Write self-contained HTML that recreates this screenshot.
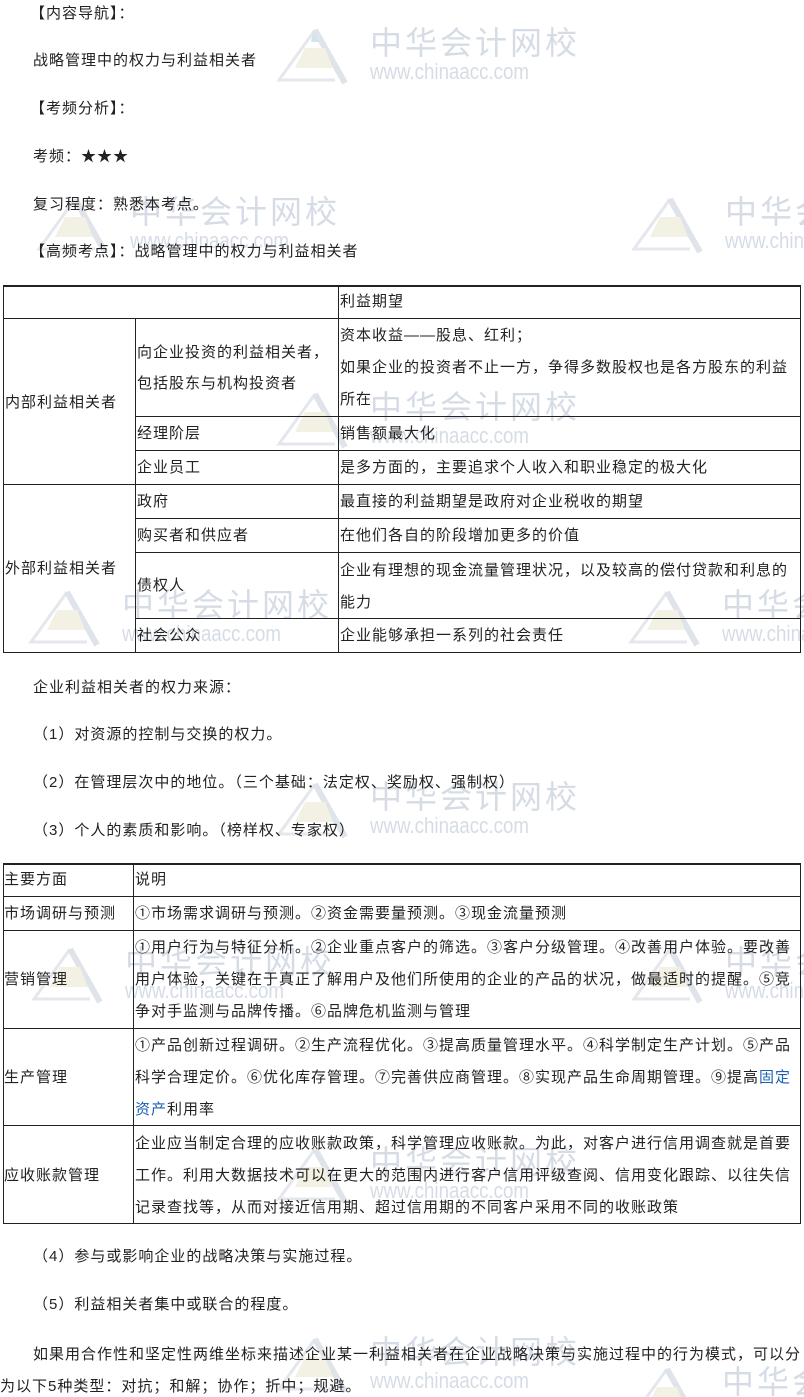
<!DOCTYPE html>
<html><head><meta charset="utf-8">
<style>
*{margin:0;padding:0;box-sizing:border-box}
body{width:804px;height:1397px;background:#fff;position:relative;overflow:hidden;font-family:"Liberation Sans","Noto Sans CJK SC",sans-serif;font-size:15px;letter-spacing:1px;color:#222}
#wmw{position:absolute;left:0;top:0;width:804px;height:1397px;overflow:hidden;z-index:0}
.t{position:absolute;white-space:nowrap;line-height:20px;z-index:2}
.wm{position:absolute;color:#d6dce6;white-space:nowrap;letter-spacing:0}
.wm .a{font-size:32px;line-height:34px;letter-spacing:3px}
.wm .b{font-size:22px;line-height:24px;transform:scaleX(0.85);transform-origin:left}
.wm svg{position:absolute;left:-95px;top:2px}
.ln{position:absolute;background:#222;z-index:2}
</style></head><body>
<div id="wmw">
<div class="wm" style="left:370px;top:26px"><svg width="90" height="62" viewBox="0 0 90 62"><path d="M40 2 L4 52 L60 52" fill="none" stroke="#e4e7ec" stroke-width="3"/><path d="M40 2 L70 55" fill="none" stroke="#dfe3ea" stroke-width="6"/><path d="M30 20 L50 20 L58 40 L20 40Z" fill="#f3f0e4"/><path d="M38 4 L44 14 L36 14Z" fill="#cfe4f0"/></svg><div class="a">中华会计网校</div><div class="b">www.chinaacc.com</div></div>
<div class="wm" style="left:130px;top:195px"><svg width="90" height="62" viewBox="0 0 90 62"><path d="M40 2 L4 52 L60 52" fill="none" stroke="#e4e7ec" stroke-width="3"/><path d="M40 2 L70 55" fill="none" stroke="#dfe3ea" stroke-width="6"/><path d="M30 20 L50 20 L58 40 L20 40Z" fill="#f3f0e4"/></svg><div class="a">中华会计网校</div><div class="b">www.chinaacc.com</div></div>
<div class="wm" style="left:725px;top:195px"><svg width="90" height="62" viewBox="0 0 90 62"><path d="M40 2 L4 52 L60 52" fill="none" stroke="#e4e7ec" stroke-width="3"/><path d="M40 2 L70 55" fill="none" stroke="#dfe3ea" stroke-width="6"/><path d="M30 20 L50 20 L58 40 L20 40Z" fill="#f3f0e4"/></svg><div class="a">中华会计网校</div><div class="b">www.chinaacc.com</div></div>
<div class="wm" style="left:370px;top:390px"><svg width="90" height="62" viewBox="0 0 90 62"><path d="M40 2 L4 52 L60 52" fill="none" stroke="#e4e7ec" stroke-width="3"/><path d="M40 2 L70 55" fill="none" stroke="#dfe3ea" stroke-width="6"/><path d="M30 20 L50 20 L58 40 L20 40Z" fill="#f3f0e4"/></svg><div class="a">中华会计网校</div><div class="b">www.chinaacc.com</div></div>
<div class="wm" style="left:122px;top:588px"><svg width="90" height="62" viewBox="0 0 90 62"><path d="M40 2 L4 52 L60 52" fill="none" stroke="#e4e7ec" stroke-width="3"/><path d="M40 2 L70 55" fill="none" stroke="#dfe3ea" stroke-width="6"/><path d="M30 20 L50 20 L58 40 L20 40Z" fill="#f3f0e4"/></svg><div class="a">中华会计网校</div><div class="b">www.chinaacc.com</div></div>
<div class="wm" style="left:722px;top:588px"><svg width="90" height="62" viewBox="0 0 90 62"><path d="M40 2 L4 52 L60 52" fill="none" stroke="#e4e7ec" stroke-width="3"/><path d="M40 2 L70 55" fill="none" stroke="#dfe3ea" stroke-width="6"/><path d="M30 20 L50 20 L58 40 L20 40Z" fill="#f3f0e4"/></svg><div class="a">中华会计网校</div><div class="b">www.chinaacc.com</div></div>
<div class="wm" style="left:370px;top:780px"><svg width="90" height="62" viewBox="0 0 90 62"><path d="M40 2 L4 52 L60 52" fill="none" stroke="#e4e7ec" stroke-width="3"/><path d="M40 2 L70 55" fill="none" stroke="#dfe3ea" stroke-width="6"/><path d="M30 20 L50 20 L58 40 L20 40Z" fill="#f3f0e4"/></svg><div class="a">中华会计网校</div><div class="b">www.chinaacc.com</div></div>
<div class="wm" style="left:125px;top:945px"><svg width="90" height="62" viewBox="0 0 90 62"><path d="M40 2 L4 52 L60 52" fill="none" stroke="#e4e7ec" stroke-width="3"/><path d="M40 2 L70 55" fill="none" stroke="#dfe3ea" stroke-width="6"/><path d="M30 20 L50 20 L58 40 L20 40Z" fill="#f3f0e4"/></svg><div class="a">中华会计网校</div><div class="b">www.chinaacc.com</div></div>
<div class="wm" style="left:725px;top:945px"><svg width="90" height="62" viewBox="0 0 90 62"><path d="M40 2 L4 52 L60 52" fill="none" stroke="#e4e7ec" stroke-width="3"/><path d="M40 2 L70 55" fill="none" stroke="#dfe3ea" stroke-width="6"/><path d="M30 20 L50 20 L58 40 L20 40Z" fill="#f3f0e4"/></svg><div class="a">中华会计网校</div><div class="b">www.chinaacc.com</div></div>
<div class="wm" style="left:370px;top:1145px"><svg width="90" height="62" viewBox="0 0 90 62"><path d="M40 2 L4 52 L60 52" fill="none" stroke="#e4e7ec" stroke-width="3"/><path d="M40 2 L70 55" fill="none" stroke="#dfe3ea" stroke-width="6"/><path d="M30 20 L50 20 L58 40 L20 40Z" fill="#f3f0e4"/></svg><div class="a">中华会计网校</div><div class="b">www.chinaacc.com</div></div>
<div class="wm" style="left:370px;top:1335px"><svg width="90" height="62" viewBox="0 0 90 62"><path d="M40 2 L4 52 L60 52" fill="none" stroke="#e4e7ec" stroke-width="3"/><path d="M40 2 L70 55" fill="none" stroke="#dfe3ea" stroke-width="6"/><path d="M30 20 L50 20 L58 40 L20 40Z" fill="#f3f0e4"/></svg><div class="a">中华会计网校</div><div class="b">www.chinaacc.com</div></div>
<div class="wm" style="left:722px;top:1365px"><svg width="90" height="62" viewBox="0 0 90 62"><path d="M40 2 L4 52 L60 52" fill="none" stroke="#e4e7ec" stroke-width="3"/><path d="M40 2 L70 55" fill="none" stroke="#dfe3ea" stroke-width="6"/><path d="M30 20 L50 20 L58 40 L20 40Z" fill="#f3f0e4"/></svg><div class="a">中华会计网校</div></div>
</div>

<div class="t" style="left:30px;top:4px">【内容导航】：</div>
<div class="t" style="left:33px;top:51px">战略管理中的权力与利益相关者</div>
<div class="t" style="left:30px;top:99px">【考频分析】：</div>
<div class="t" style="left:33px;top:147px">考频：★★★</div>
<div class="t" style="left:33px;top:195px">复习程度：熟悉本考点。</div>
<div class="t" style="left:30px;top:242px">【高频考点】：战略管理中的权力与利益相关者</div>

<div class="ln" style="left:3px;top:285px;width:798px;height:2px"></div>
<div class="ln" style="left:3px;top:318px;width:798px;height:1px"></div>
<div class="ln" style="left:135px;top:416px;width:666px;height:1px"></div>
<div class="ln" style="left:135px;top:450px;width:666px;height:1px"></div>
<div class="ln" style="left:3px;top:484px;width:798px;height:1px"></div>
<div class="ln" style="left:135px;top:518px;width:666px;height:1px"></div>
<div class="ln" style="left:135px;top:552px;width:666px;height:1px"></div>
<div class="ln" style="left:135px;top:618px;width:666px;height:1px"></div>
<div class="ln" style="left:3px;top:652px;width:798px;height:1px"></div>
<div class="ln" style="left:3px;top:285px;width:1px;height:368px"></div>
<div class="ln" style="left:135px;top:318px;width:1px;height:335px"></div>
<div class="ln" style="left:338px;top:285px;width:1px;height:368px"></div>
<div class="ln" style="left:800px;top:285px;width:1px;height:368px"></div>

<div class="t" style="left:340px;top:292px">利益期望</div>
<div class="t" style="left:137px;top:343px">向企业投资的利益相关者，</div>
<div class="t" style="left:137px;top:374px">包括股东与机构投资者</div>
<div class="t" style="left:5px;top:393px">内部利益相关者</div>
<div class="t" style="left:340px;top:326px">资本收益——股息、红利；</div>
<div class="t" style="left:340px;top:358px">如果企业的投资者不止一方，争得多数股权也是各方股东的利益</div>
<div class="t" style="left:340px;top:390px">所在</div>
<div class="t" style="left:137px;top:424px">经理阶层</div>
<div class="t" style="left:340px;top:424px">销售额最大化</div>
<div class="t" style="left:137px;top:458px">企业员工</div>
<div class="t" style="left:340px;top:458px">是多方面的，主要追求个人收入和职业稳定的极大化</div>
<div class="t" style="left:137px;top:492px">政府</div>
<div class="t" style="left:340px;top:492px">最直接的利益期望是政府对企业税收的期望</div>
<div class="t" style="left:5px;top:559px">外部利益相关者</div>
<div class="t" style="left:137px;top:526px">购买者和供应者</div>
<div class="t" style="left:340px;top:526px">在他们各自的阶段增加更多的价值</div>
<div class="t" style="left:137px;top:576px">债权人</div>
<div class="t" style="left:340px;top:561px">企业有理想的现金流量管理状况，以及较高的偿付贷款和利息的</div>
<div class="t" style="left:340px;top:593px">能力</div>
<div class="t" style="left:137px;top:626px">社会公众</div>
<div class="t" style="left:340px;top:626px">企业能够承担一系列的社会责任</div>

<div class="t" style="left:33px;top:678px">企业利益相关者的权力来源：</div>
<div class="t" style="left:33px;top:725px">（1）对资源的控制与交换的权力。</div>
<div class="t" style="left:33px;top:773px">（2）在管理层次中的地位。（三个基础：法定权、奖励权、强制权）</div>
<div class="t" style="left:33px;top:821px">（3）个人的素质和影响。（榜样权、专家权）</div>

<div class="ln" style="left:3px;top:863px;width:798px;height:2px"></div>
<div class="ln" style="left:3px;top:896px;width:798px;height:1px"></div>
<div class="ln" style="left:3px;top:930px;width:798px;height:1px"></div>
<div class="ln" style="left:3px;top:1028px;width:798px;height:1px"></div>
<div class="ln" style="left:3px;top:1125px;width:798px;height:1px"></div>
<div class="ln" style="left:3px;top:1223px;width:798px;height:1px"></div>
<div class="ln" style="left:3px;top:863px;width:1px;height:361px"></div>
<div class="ln" style="left:133px;top:863px;width:1px;height:361px"></div>
<div class="ln" style="left:800px;top:863px;width:1px;height:361px"></div>

<div class="t" style="left:4px;top:870px">主要方面</div>
<div class="t" style="left:135px;top:870px">说明</div>
<div class="t" style="left:4px;top:904px">市场调研与预测</div>
<div class="t" style="left:135px;top:904px">①市场需求调研与预测。②资金需要量预测。③现金流量预测</div>
<div class="t" style="left:4px;top:970px">营销管理</div>
<div class="t" style="left:135px;top:938px">①用户行为与特征分析。②企业重点客户的筛选。③客户分级管理。④改善用户体验。要改善</div>
<div class="t" style="left:135px;top:970px">用户体验，关键在于真正了解用户及他们所使用的企业的产品的状况，做最适时的提醒。⑤竞</div>
<div class="t" style="left:135px;top:1002px">争对手监测与品牌传播。⑥品牌危机监测与管理</div>
<div class="t" style="left:4px;top:1068px">生产管理</div>
<div class="t" style="left:135px;top:1036px">①产品创新过程调研。②生产流程优化。③提高质量管理水平。④科学制定生产计划。⑤产品</div>
<div class="t" style="left:135px;top:1068px">科学合理定价。⑥优化库存管理。⑦完善供应商管理。⑧实现产品生命周期管理。⑨提高<span style="color:#1a5fb4">固定</span></div>
<div class="t" style="left:135px;top:1100px"><span style="color:#1a5fb4">资产</span>利用率</div>
<div class="t" style="left:4px;top:1166px">应收账款管理</div>
<div class="t" style="left:135px;top:1134px">企业应当制定合理的应收账款政策，科学管理应收账款。为此，对客户进行信用调查就是首要</div>
<div class="t" style="left:135px;top:1166px">工作。利用大数据技术可以在更大的范围内进行客户信用评级查阅、信用变化跟踪、以往失信</div>
<div class="t" style="left:135px;top:1198px">记录查找等，从而对接近信用期、超过信用期的不同客户采用不同的收账政策</div>

<div class="t" style="left:33px;top:1247px">（4）参与或影响企业的战略决策与实施过程。</div>
<div class="t" style="left:33px;top:1295px">（5）利益相关者集中或联合的程度。</div>
<div class="t" style="left:33px;top:1345px">如果用合作性和坚定性两维坐标来描述企业某一利益相关者在企业战略决策与实施过程中的行为模式，可以分</div>
<div class="t" style="left:0px;top:1377px">为以下5种类型：对抗；和解；协作；折中；规避。</div>
</body></html>
